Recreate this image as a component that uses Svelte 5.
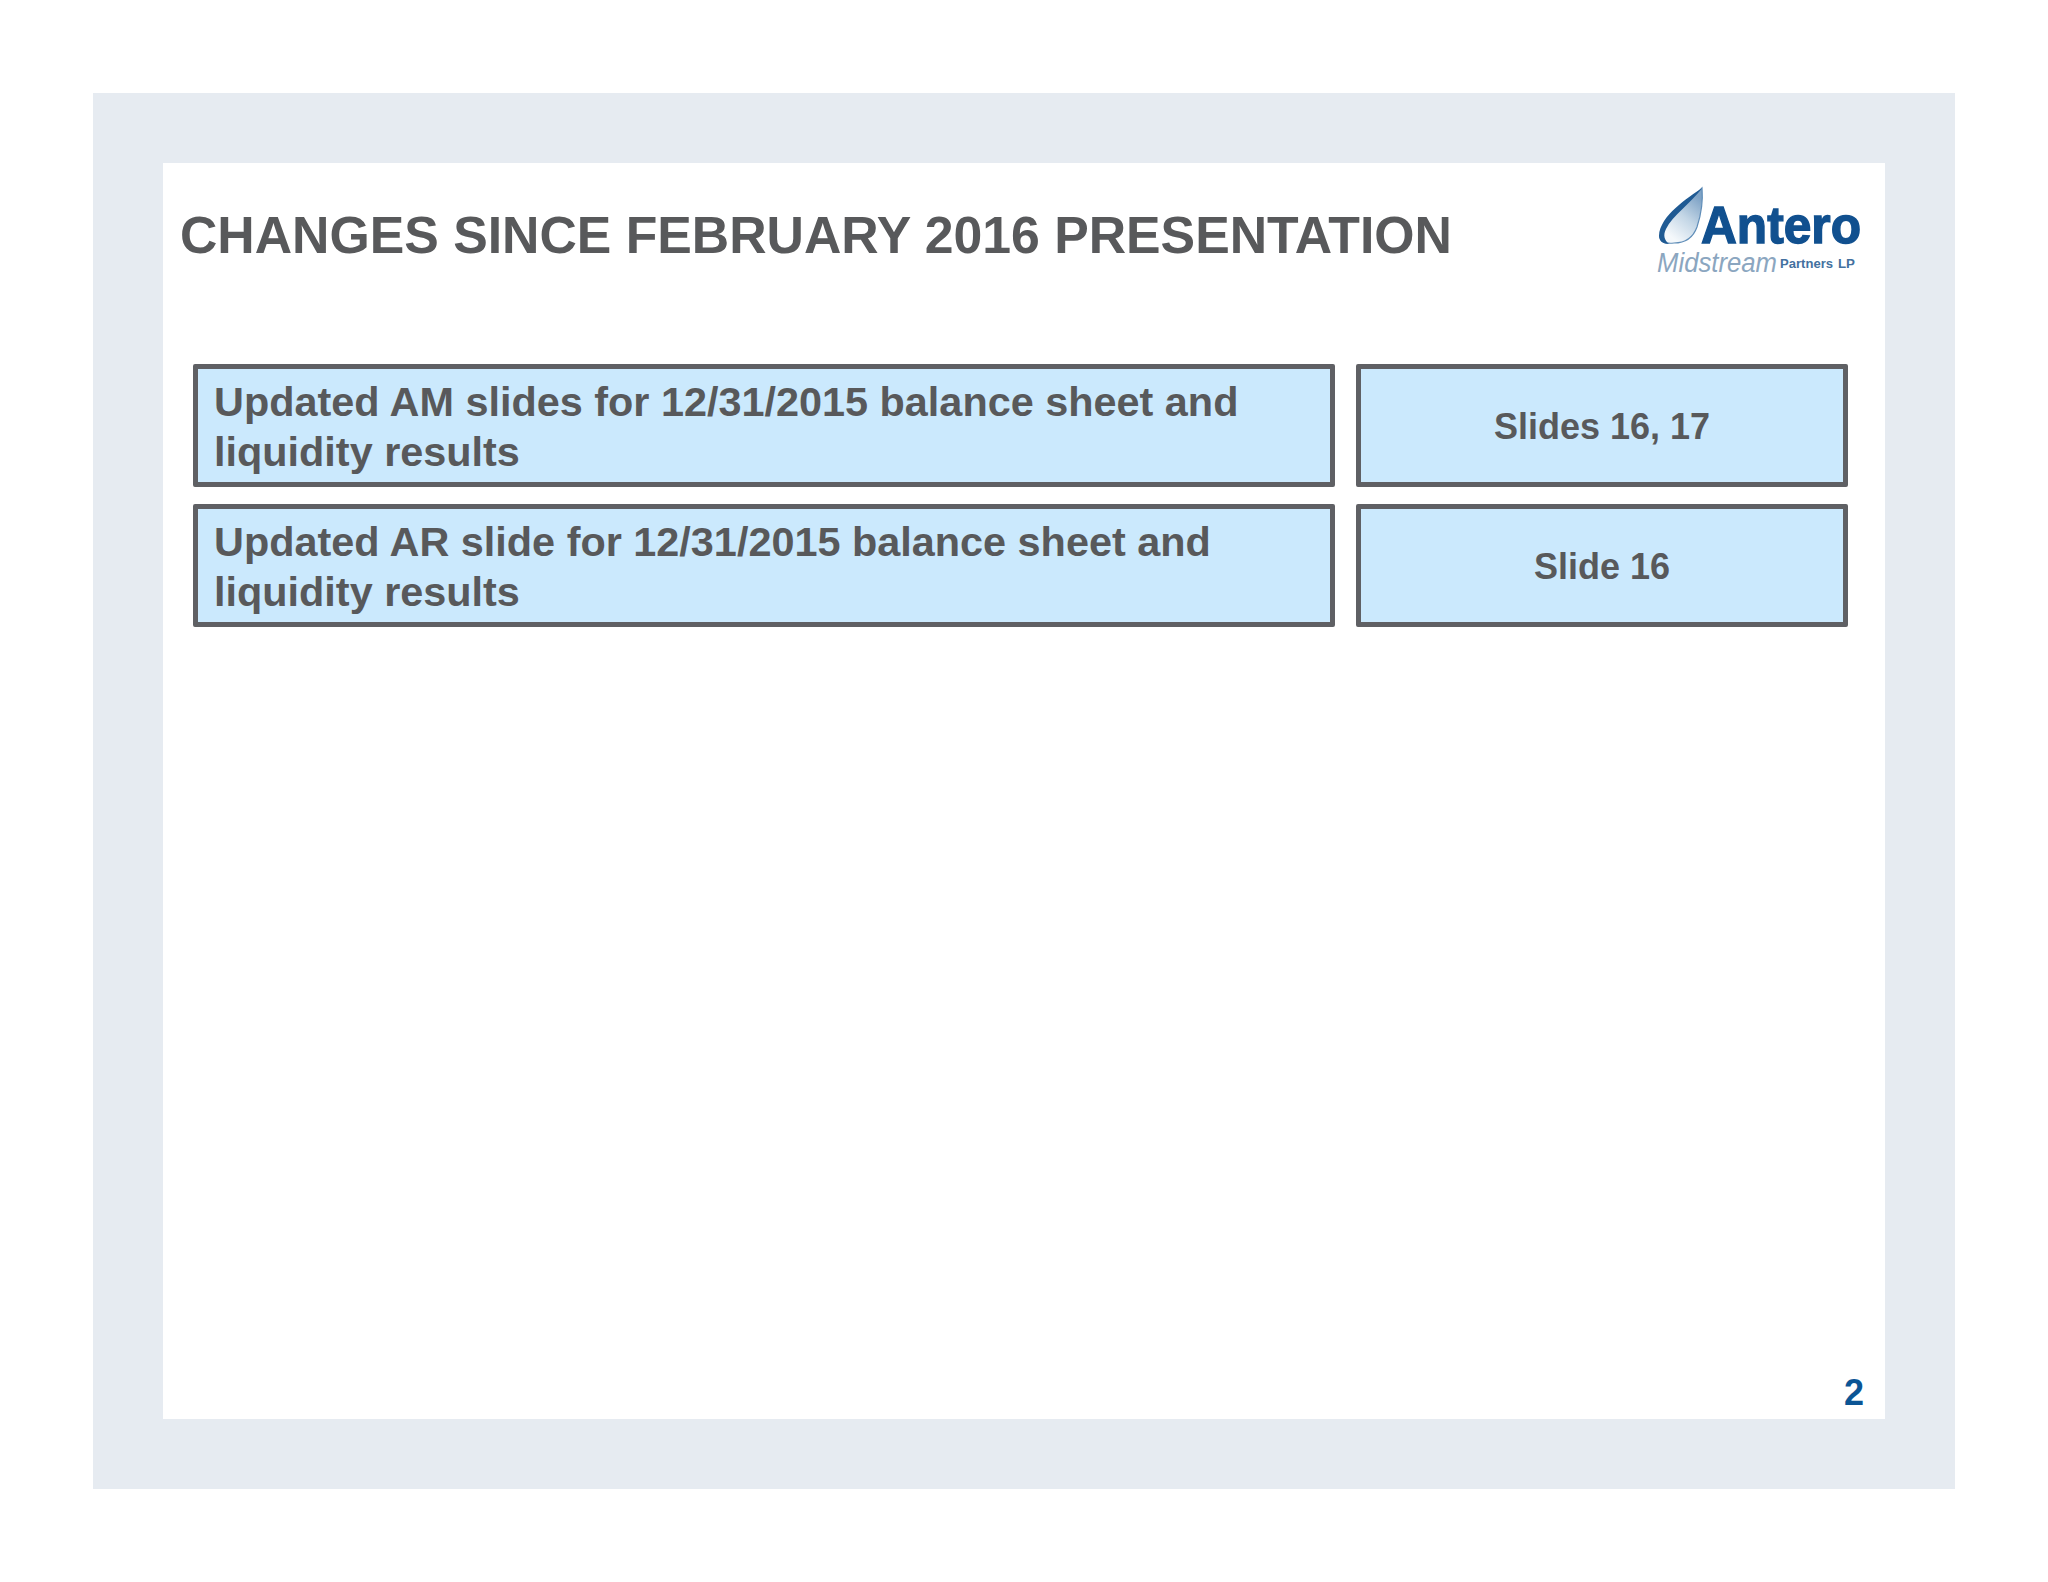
<script>
  const rows = [
    { text: 'Updated AM slides for 12/31/2015 balance sheet and liquidity results', slides: 'Slides 16, 17' },
    { text: 'Updated AR slide for 12/31/2015 balance sheet and liquidity results', slides: 'Slide 16' }
  ];
</script>

<div class="page">
  <div class="frame">
    <header>
      <h1>CHANGES SINCE FEBRUARY 2016 PRESENTATION</h1>
      <svg class="logo" width="220" height="100" viewBox="0 0 220 100" role="img" aria-label="Antero Midstream Partners LP">
        <defs>
          <linearGradient id="flame" x1="0.8" y1="0.1" x2="0.3" y2="0.9">
            <stop offset="0" stop-color="#7fa3c6" />
            <stop offset="0.5" stop-color="#c3d6e6" />
            <stop offset="1" stop-color="#f4f8fb" />
          </linearGradient>
        </defs>
        <!-- teardrop, pale fill with a thin blue edge -->
        <path d="M52 8 C42 20 12 36 10 56 C10 62 16 64 24 63 C35 63 43 58 47 47 C51 35 53 20 52 8 Z" fill="url(#flame)" stroke="#5f8db8" stroke-width="1.2" />
        <!-- heavy left edge -->
        <path d="M52 8 C38 18 10 35 9 56 C9 61 13 64 19 64 C14 60 13 55 16 49 C22 36 42 22 52 8 Z" fill="#1f5a93" />
        <text class="antero" x="51" y="63" textLength="160" lengthAdjust="spacingAndGlyphs">Antero</text>
        <text class="midstream" x="7" y="92" textLength="120" lengthAdjust="spacingAndGlyphs">Midstream</text>
        <text class="partners" x="130" y="88" textLength="53" lengthAdjust="spacingAndGlyphs">Partners</text>
        <text class="partners" x="188" y="88" textLength="17" lengthAdjust="spacingAndGlyphs">LP</text>
      </svg>
    </header>

    <section class="rows">
      {#each rows as row}
        <div class="box main">{row.text}</div>
        <div class="box side">{row.slides}</div>
      {/each}
    </section>

    <div class="page-number">2</div>
  </div>
</div>

<style>
  :global(body) {
    margin: 0;
    background: #fff;
  }

  .page {
    box-sizing: border-box;
    width: 2048px;
    height: 1582px;
    padding: 93px;
    font-family: "Liberation Sans", Arial, sans-serif;
    color: #58595b;
  }

  .frame {
    box-sizing: border-box;
    height: 100%;
    padding: 70px;
    background: #e6ebf1;
    display: flex;
    flex-direction: column;
  }

  header {
    display: flex;
    justify-content: space-between;
    align-items: flex-start;
    height: 201px;
    background: #fff;
    padding: 17px 15px 0 17px;
    box-sizing: border-box;
  }

  h1 {
    margin: 26px 0 0;
    font-size: 51.75px;
    line-height: 58px;
    font-weight: 700;
    white-space: nowrap;
  }

  .logo {
    flex: none;
  }

  .logo text {
    font-family: "Liberation Sans", Arial, sans-serif;
  }

  .antero {
    font-size: 52px;
    font-weight: 700;
    fill: #11508f;
    stroke: #11508f;
    stroke-width: 1.4px;
  }

  .midstream {
    font-size: 27px;
    font-style: italic;
    fill: #8ba6c0;
  }

  .partners {
    font-size: 12px;
    font-weight: 700;
    fill: #43719f;
  }

  .rows {
    flex: 1;
    display: grid;
    grid-template-columns: 1142px 492px;
    grid-auto-rows: 123px;
    column-gap: 21px;
    row-gap: 17px;
    padding: 0 36px 0 30px;
    align-content: start;
    background: #fff;
  }

  .box {
    box-sizing: border-box;
    border: 5px solid #5f6064;
    border-radius: 2px;
    background: #cbe9fd;
    font-size: 41.4px;
    line-height: 50px;
    font-weight: 700;
  }

  .main {
    display: flex;
    align-items: center;
    padding: 2px 60px 0 16px;
  }

  .side {
    display: flex;
    align-items: center;
    justify-content: center;
    padding-top: 3px;
    font-size: 36px;
  }

  .page-number {
    background: #fff;
    height: 44px;
    box-sizing: border-box;
    padding-right: 21px;
    text-align: right;
    font-size: 36px;
    line-height: 36px;
    font-weight: 700;
    color: #0b5595;
  }
</style>
